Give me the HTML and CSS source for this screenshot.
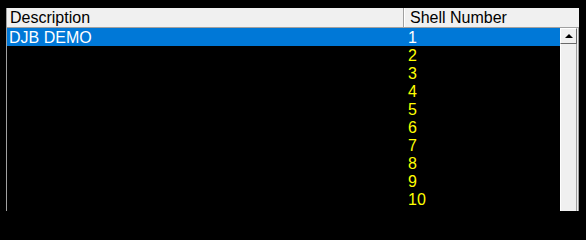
FILE: index.html
```html
<!DOCTYPE html>
<html>
<head>
<meta charset="utf-8">
<link rel="stylesheet" href="styles.css">
</head>
<body>
<div class="list">
  <div class="header">
    <div class="hcell hdesc">Description</div>
    <div class="hcell hshell">Shell Number</div>
  </div>
  <div class="body">
    <div class="rows">
      <div class="row selected"><span class="desc">DJB DEMO</span><span class="shell">1</span></div>
      <div class="row"><span class="desc"></span><span class="shell">2</span></div>
      <div class="row"><span class="desc"></span><span class="shell">3</span></div>
      <div class="row"><span class="desc"></span><span class="shell">4</span></div>
      <div class="row"><span class="desc"></span><span class="shell">5</span></div>
      <div class="row"><span class="desc"></span><span class="shell">6</span></div>
      <div class="row"><span class="desc"></span><span class="shell">7</span></div>
      <div class="row"><span class="desc"></span><span class="shell">8</span></div>
      <div class="row"><span class="desc"></span><span class="shell">9</span></div>
      <div class="row"><span class="desc"></span><span class="shell">10</span></div>
    </div>
    <div class="scrollbar">
      <div class="arrow-btn"><span class="tri"></span></div>
      <div class="track"></div>
    </div>
  </div>
</div>
</body>
</html>
```
FILE: styles.css
```css
html, body {
  margin: 0;
  padding: 0;
  background: #000;
  overflow: hidden;
  height: 211px;
}
body {
  padding: 8px 0 0 6px;
  box-sizing: border-box;
  font-family: "Liberation Sans", Arial, sans-serif;
  font-size: 16px;
}
.list {
  width: 572px;
  height: 210px;
  border-left: 1px solid #a0a0a0;
  display: flex;
  flex-direction: column;
}
.header {
  display: flex;
  height: 20px;
  background: #f0f0f0;
  border-bottom: 1px solid #a0a0a0;
  box-sizing: border-box;
  color: #000;
}
.hcell {
  line-height: 19px;
  white-space: nowrap;
}
.hdesc {
  width: 397px;
  padding-left: 3px;
  box-sizing: border-box;
  border-right: 1px solid #a0a0a0;
}
.hshell {
  flex: 1;
  padding-left: 5px;
  border-left: 1px solid #fff;
}
.body {
  flex: 1;
  display: flex;
  background: #000;
  border-right: 1px solid #a0a0a0;
}
.rows {
  width: 553px;
}
.row {
  display: flex;
  height: 18px;
  line-height: 19px;
  color: #ffff00;
  white-space: nowrap;
}
.row.selected {
  background: #0078d7;
  color: #fff;
}
.desc {
  width: 398px;
  padding-left: 2px;
  box-sizing: border-box;
}
.shell {
  padding-left: 3px;
}
.scrollbar {
  width: 18px;
  padding-right: 1px;
  box-sizing: border-box;
  display: flex;
  flex-direction: column;
  background: #f0f0f0;
}
.arrow-btn {
  height: 16px;
  background: #f0f0f0;
  border-left: 1px solid #fff;
  border-top: 1px solid #fff;
  border-right: 1px solid #696969;
  border-bottom: 1px solid #696969;
  box-sizing: border-box;
  display: flex;
  align-items: center;
  justify-content: center;
}
.tri {
  width: 0;
  height: 0;
  border-left: 4px solid transparent;
  border-right: 4px solid transparent;
  border-bottom: 4px solid #000;
}
.track {
  flex: 1;
  border-left: 1px solid #fff;
  border-right: 1px solid #a0a0a0;
}
```
